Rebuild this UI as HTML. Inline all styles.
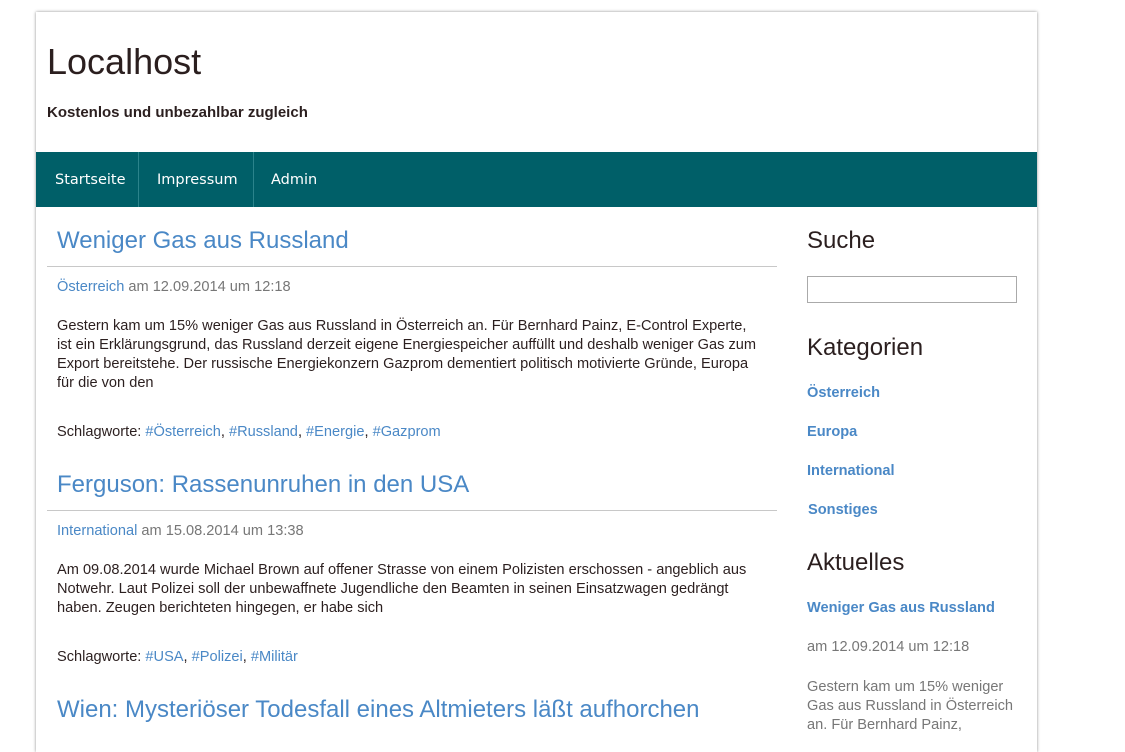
<!DOCTYPE html>
<html><head><meta charset="utf-8"><style>
html,body{margin:0;height:724px;overflow:hidden}
body{background:#fff;font-family:"Liberation Sans",Arial,sans-serif;color:#333;}
#w{position:absolute;left:36px;top:12px;width:1001px;height:740px;background:#fff;box-shadow:0 0 3px rgba(0,0,0,.45);overflow:hidden}
.a{position:absolute;white-space:nowrap}
a{color:#4a88c6;text-decoration:none}
h1{position:absolute;left:11px;top:29px;margin:0;font-size:36px;font-weight:normal;color:#2b1f1f}
.sub{position:absolute;left:11px;top:92px;font-size:15px;font-weight:bold;color:#2b1f1f}
nav{position:absolute;left:0;top:140px;width:1001px;height:55px;background:#005f68}
nav span{position:absolute;top:20px;color:#fff;font-family:"DejaVu Sans",sans-serif;font-size:14.5px}
nav i{position:absolute;top:0;width:1px;height:55px;background:#2b838b}
.t{font-size:24px;color:#4a88c6}
.hr{position:absolute;left:11px;width:730px;height:1px;background:#c8c8c8}
.m{font-size:14.6px;color:#777}
.p{position:absolute;left:21px;width:705px;font-size:14.6px;line-height:19px;color:#2b1f1f;white-space:normal}
.s{font-size:14.6px;color:#2b1f1f}
.h{font-size:24px;color:#2b1f1f}
.c{font-size:14.6px;font-weight:bold}
</style></head><body>
<div id="w">
<h1>Localhost</h1>
<div class="sub">Kostenlos und unbezahlbar zugleich</div>
<nav><span style="left:19px">Startseite</span><i style="left:102px"></i><span style="left:121px">Impressum</span><i style="left:217px"></i><span style="left:235px">Admin</span></nav>

<div class="a t" style="left:21px;top:215px">Weniger Gas aus Russland</div>
<div class="hr" style="top:254px"></div>
<div class="a m" style="left:21px;top:267px"><a href="#">Österreich</a> am 12.09.2014 um 12:18</div>
<div class="p" style="top:305px">Gestern kam um 15% weniger Gas aus Russland in Österreich an. Für Bernhard Painz, E-Control Experte, ist ein Erklärungsgrund, das Russland derzeit eigene Energiespeicher auffüllt und deshalb weniger Gas zum Export bereitstehe. Der russische Energiekonzern Gazprom dementiert politisch motivierte Gründe, Europa für die von den</div>
<div class="a s" style="left:21px;top:412px">Schlagworte: <a href="#">#Österreich</a>, <a href="#">#Russland</a>, <a href="#">#Energie</a>, <a href="#">#Gazprom</a></div>

<div class="a t" style="left:21px;top:459px">Ferguson: Rassenunruhen in den USA</div>
<div class="hr" style="top:498px"></div>
<div class="a m" style="left:21px;top:511px"><a href="#">International</a> am 15.08.2014 um 13:38</div>
<div class="p" style="top:549px">Am 09.08.2014 wurde Michael Brown auf offener Strasse von einem Polizisten erschossen - angeblich aus Notwehr. Laut Polizei soll der unbewaffnete Jugendliche den Beamten in seinen Einsatzwagen gedrängt haben. Zeugen berichteten hingegen, er habe sich</div>
<div class="a s" style="left:21px;top:637px">Schlagworte: <a href="#">#USA</a>, <a href="#">#Polizei</a>, <a href="#">#Militär</a></div>

<div class="a t" style="left:21px;top:684px">Wien: Mysteriöser Todesfall eines Altmieters läßt aufhorchen</div>

<div class="a h" style="left:771px;top:215px">Suche</div>
<div class="a" style="left:771px;top:264px;width:208px;height:25px;border:1px solid #aaa"></div>
<div class="a h" style="left:771px;top:322px">Kategorien</div>
<div class="a c" style="left:771px;top:373px"><a href="#">Österreich</a></div>
<div class="a c" style="left:771px;top:412px"><a href="#">Europa</a></div>
<div class="a c" style="left:771px;top:451px"><a href="#">International</a></div>
<div class="a c" style="left:772px;top:490px"><a href="#">Sonstiges</a></div>
<div class="a h" style="left:771px;top:537px">Aktuelles</div>
<div class="a c" style="left:771px;top:588px"><a href="#">Weniger Gas aus Russland</a></div>
<div class="a m" style="left:771px;top:627px">am 12.09.2014 um 12:18</div>
<div class="a m" style="left:771px;top:666px;white-space:normal;width:212px;line-height:19px">Gestern kam um 15% weniger Gas aus Russland in Österreich an. Für Bernhard Painz,</div>
</div>
</body></html>
